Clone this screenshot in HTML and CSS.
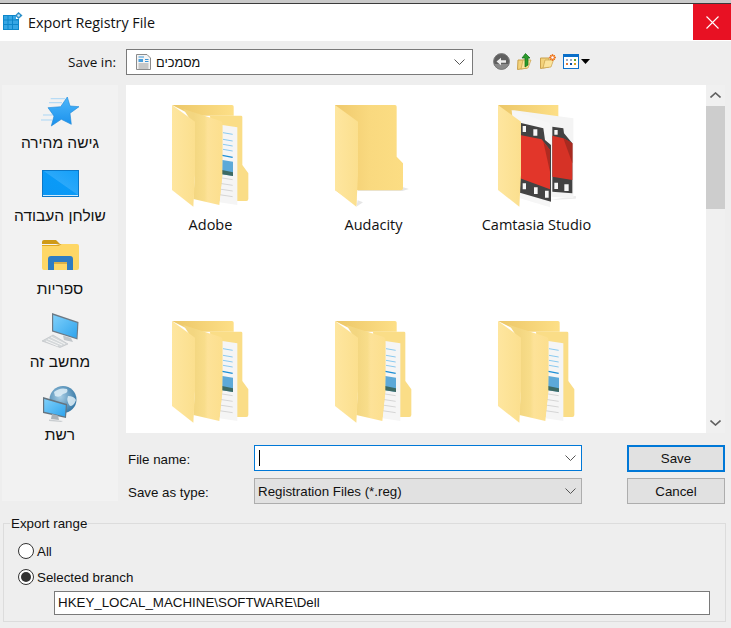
FILE: index.html
```html
<!DOCTYPE html>
<html lang="en">
<head>
<meta charset="utf-8">
<title>Export Registry File</title>
<link rel="stylesheet" href="styles.css">
</head>
<body>
<svg class="defs" width="0" height="0" aria-hidden="true">
  <defs>
    <linearGradient id="flap" x1="0" y1="0" x2="1" y2="0"><stop offset="0" stop-color="#fee69f"/><stop offset="1" stop-color="#fbdf8e"/></linearGradient>
    <linearGradient id="flap2" gradientUnits="userSpaceOnUse" x1="100" y1="0" x2="187" y2="0"><stop offset="0" stop-color="#f3d680"/><stop offset=".38" stop-color="#f8dd8a"/><stop offset=".5" stop-color="#fde298"/><stop offset="1" stop-color="#fcdf8e"/></linearGradient>
    <linearGradient id="tab" x1="0" y1="0" x2="1" y2="0"><stop offset="0" stop-color="#ecc768"/><stop offset="1" stop-color="#fddf87"/></linearGradient>
    <linearGradient id="back" x1="0" y1="0" x2="1" y2="0"><stop offset="0" stop-color="#efc96c"/><stop offset=".5" stop-color="#f9d97f"/><stop offset="1" stop-color="#fcdd83"/></linearGradient>
    <linearGradient id="desk" x1="0" y1="1" x2="1" y2="0"><stop offset="0" stop-color="#0b97f4"/><stop offset=".5" stop-color="#0a9af7"/><stop offset=".52" stop-color="#2aa8fa"/><stop offset="1" stop-color="#15a0f8"/></linearGradient>
    <linearGradient id="star" x1="0" y1="0" x2="0" y2="1"><stop offset="0" stop-color="#4cb7fb"/><stop offset="1" stop-color="#1a90ec"/></linearGradient>
    <linearGradient id="scr" x1="0" y1="0" x2="1" y2="1"><stop offset="0" stop-color="#7fd0fb"/><stop offset="1" stop-color="#2ea3ec"/></linearGradient>
    <radialGradient id="globe" cx=".4" cy=".4" r=".7"><stop offset="0" stop-color="#a9cfe6"/><stop offset="1" stop-color="#2a6f9f"/></radialGradient>

    <symbol id="folder-docs" viewBox="30 30 240 315">
      <path d="M36 30H216q5 0 5 5V62H100Z" fill="url(#tab)"/>
      <path d="M150 62H243q4 0 4 4V210L265 235V312q0 6-6 6H170Z" fill="#fadd87"/>
      <path d="M187 90 232 97V330L178 322 187 240Z" fill="#f5f5f5"/>
      <path d="M189 113 218 118M189 133 218 138M189 148 218 153M189 163 218 168" stroke="#74c0ee" stroke-width="2.500"/>
      <path d="M187 181 218 187" stroke="#1c8fd6" stroke-width="4"/>
      <path d="M187 195 219 200V243L186 238Z" fill="#5da9d8"/>
      <path d="M186 225 219 232V243L186 238Z" fill="#3d6a63"/>
      <path d="M180 248 218 254M179 265 218 271M178 282 218 288M178 299 218 305" stroke="#c4c4c4" stroke-width="2"/>
      <path d="M70 42 182 78Q187 80 187 85V240L178 330 100 312 104 250V95Z" fill="url(#flap2)"/>
      <path d="M36 30 105 80V240L100 335 36 285Z" fill="url(#flap)"/>
    </symbol>

    <symbol id="folder-plain" viewBox="30 30 240 315">
      <path d="M105 288H238L258 282 238 276H105ZM100 335 120 322 104 316Z" fill="#e6e6e6"/>
      <path d="M36 30H216q5 0 5 5V185L240 205V280q0 6-6 6H100V330L36 285Z" fill="url(#back)"/>
      <path d="M36 30 105 80V240L100 335 36 285Z" fill="url(#flap)"/>
    </symbol>

    <symbol id="folder-film" viewBox="30 30 240 315">
      <path d="M36 30H217V80H60Z" fill="url(#tab)"/>
      <g transform="translate(27 15)">
        <path d="M165 300 240 296 255 292 240 288Z" fill="#ececec"/>
        <path d="M52 30 235 55V295L170 290 100 60Z" fill="#f4f4f4"/>
        <path d="M172 80 205 85 207 100 232 130V280L172 275Z" fill="#424242"/>
        <path d="M172 107 205 115 232 130V240L172 230Z" fill="#d63226"/>
        <path d="M205 115 232 130V190Z" fill="#a82a20"/>
        <path d="M178 90h10v14h-10zM178 248h11v19h-11zM208 253h13v20h-13z" fill="#f6f6f6"/>
        <path d="M50 30 165 70V322L75 295Z" fill="#f6f6f6"/>
        <path d="M75 68 145 85 150 120 168 135V305L75 278Z" fill="#434343"/>
        <path d="M75 105 140 118 165 150V268L75 235Z" fill="#e2362a"/>
        <path d="M145 125 165 150V215Z" fill="#b02b21"/>
        <path d="M83 78h10v18H83zM115 88h12v19h-12zM83 250h10v18H83zM117 262h11v20h-11zM150 272h11v21h-11z" fill="#f7f7f7"/>
      </g>
      <path d="M36 30 105 80V240L100 335 36 285Z" fill="url(#flap)"/>
    </symbol>
  </defs>
</svg>

<div class="window">
  <div class="strip"></div>
  <header class="titlebar">
    <svg class="app-icon" width="20" height="20" viewBox="0 0 20 20">
      <path d="M0 3H13V7H16V18H0Z" fill="#0d86c9"/>
      <path d="M1 4h3.500v3.500H1zM5.500 4H9v3.500H5.500zM10 4h3v3.500h-3zM1 8.500h3.500V12H1zM5.500 8.500H9V12H5.500zM10 8.500h5V12h-5zM1 13h3.500v4H1zM5.500 13H9v4H5.500zM10 13h5v4h-5z" fill="#36a6e4"/>
      <path d="M15.500 0 19.500 3.500 15.500 7 12 3.500Z" fill="#2b8fc9"/><circle cx="15.600" cy="3.500" r="1.300" fill="#c8e6f7"/>
    </svg>
    <span class="title">Export Registry File</span>
    <button class="close" type="button" aria-label="Close">
      <svg width="13" height="13" viewBox="0 0 13 13"><path d="M.5.500 12.500 12.500M12.500.500.5 12.500" stroke="#fff" stroke-width="1.100"/></svg>
    </button>
  </header>

  <div class="toolbar">
    <span class="save-in">Save in:</span>
    <div class="combo">
      <svg width="15" height="16" viewBox="0 0 15 16"><path d="M.5.500H11L14.500 4V15.500H.5Z" fill="#f4f4f4" stroke="#8b8b8b"/><path d="M2.500 3H8M9 5.500H12.500M9 7.500H12.500" stroke="#3a95d8"/><path d="M2.500 8H7V5H2.500Z" fill="#4a9fdc"/><path d="M2.500 10H12.500M2.500 12H12.500M2.500 14H12.500" stroke="#9a9a9a"/></svg>
      <span class="combo-text" dir="rtl">מסמכים</span>
      <svg class="chev" width="11" height="6" viewBox="0 0 11 6"><path d="M.5.500 5.500 5.500 10.500.500" fill="none" stroke="#555"/></svg>
    </div>
    <div class="tools">
      <svg width="17" height="17" viewBox="0 0 17 17"><circle cx="8.500" cy="8.500" r="8" fill="#5f5f5f"/><path d="M1 11A8 8 0 0 0 16 11Z" fill="#8a8a8a"/><circle cx="8.500" cy="8.500" r="7.900" fill="none" stroke="#7d7d7d"/><path d="M3.500 8.500 8 4.800V7.200H13V9.800H8V12.200Z" fill="#eee"/></svg>
      <svg class="up" width="15" height="17" viewBox="0 0 15 17"><path d="M1 7H10V15L.5 16.500Z" fill="#f3d27a" stroke="#c9a04b"/><path d="M4 16 11 15 14 7H6Z" fill="#fbe39b" stroke="#c9a04b" stroke-width=".7"/><path d="M8.500.5 13 5H11V12L8 14V5H5Z" fill="#2b9a2b" stroke="#0f6e14" stroke-width=".7"/></svg>
      <svg class="new" width="16" height="15" viewBox="0 0 16 15"><path d="M.5 4H9V13L.5 14.500Z" fill="#f3d27a" stroke="#c9a04b"/><path d="M3 14 11 13 13.500 6H5Z" fill="#fbe39b" stroke="#c9a04b" stroke-width=".7"/><circle cx="12.500" cy="3.500" r="3" fill="#f2a23a"/><path d="M12.500 0V7M9 3.500H16M10 1 15 6M15 1 10 6" stroke="#e8602c" stroke-width=".8"/><circle cx="12.500" cy="3.500" r="1.200" fill="#fff"/></svg>
      <svg class="views" width="16" height="15" viewBox="0 0 16 15"><rect x=".5" y=".5" width="15" height="14" fill="#fff" stroke="#0a6fc9"/><rect x="0" y="0" width="16" height="3" fill="#0a6fc9"/><path d="M3 5h2v2H3zM7 5h2v2H7z" fill="#9aa9c4"/><path d="M11 5h2v2h-2z" fill="#5aa02c"/><path d="M3 9h2v2H3z" fill="#e07a3a"/><path d="M7 9h2v2H7z" fill="#0a4fa0"/><path d="M11 9h2v2h-2z" fill="#d8a020"/></svg>
      <svg class="caret" width="9" height="5" viewBox="0 0 9 5"><path d="M0 0H9L4.500 5Z" fill="#000"/></svg>
    </div>
  </div>

  <main class="main">
    <nav class="places" dir="rtl">
      <div class="place">
        <svg class="i-star" width="38" height="30" viewBox="0 0 38 30"><path d="M9.700 1.700H24M8 5.700H21M2 18H13M-.3 23H11" stroke="#a9d6f5" stroke-width="1"/><path d="M26.300 0 29 9 38 9.700 29 16.300 30.300 27.300 20.300 22.300 10.300 29 13 19 7 10.700 19.700 9.700Z" fill="url(#star)" stroke="#1a86d8" stroke-width=".6"/></svg>
        <span>גישה מהירה</span>
      </div>
      <div class="place">
        <svg class="i-desk" width="37" height="27" viewBox="0 0 37 27"><rect width="37" height="27" fill="#0b78c8"/><rect x="1" y="1" width="35" height="24.500" fill="url(#desk)"/><path d="M1 25.500H36" stroke="#cfeafc"/></svg>
        <span>שולחן העבודה</span>
      </div>
      <div class="place">
        <svg class="i-lib" width="37" height="30" viewBox="0 0 37 30"><path d="M0 2Q0 0 2 0H14L18 4H0Z" fill="#cf9a17"/><path d="M0 6H17L20 4H35Q37 4 37 6V28Q37 30 35 30H2Q0 30 0 28Z" fill="#fed766"/><path d="M0 6H17L20 4H18L14 5H0Z" fill="#e0a820"/><path d="M6 30V19Q6 16 9 16H28Q31 16 31 19V30H25V22H12V30Z" fill="#2f7cc2"/><path d="M12 22H25V24H12Z" fill="#d9b04a"/></svg>
        <span>ספריות</span>
      </div>
      <div class="place">
        <svg class="i-pc" width="37" height="35" viewBox="0 0 37 35"><path d="M10 0 36.500 9 35.500 26.500 10 18.500Z" fill="#6c7a86"/><path d="M11.200 2 35.300 10 34.500 25 11.200 17.500Z" fill="url(#scr)"/><path d="M21 22.500 29 25 31 29 22 27Z" fill="#c2c7cb"/><path d="M11 22 26 31 18 34.500 0 28Z" fill="#d4d8da" stroke="#b2b7bb" stroke-width=".5"/><path d="M6 26 20 32M4 28 16 33M9 24 23 31" stroke="#f4f4f4"/></svg>
        <span>מחשב זה</span>
      </div>
      <div class="place">
        <svg class="i-net" width="35" height="36" viewBox="0 0 35 36"><circle cx="20" cy="13.500" r="13.500" fill="url(#globe)"/><path d="M11 6Q17 1 24 3 26 7 20 8 17 12 12 10ZM25 10Q31 10 33 14 31 20 27 20 23 15 25 10Z" fill="#dfeef7" opacity=".85"/><path d="M0 11 24 18 23 32 0 27Z" fill="#66737e"/><path d="M1.200 13 22.800 19.300 22 30.500 1.200 25.800Z" fill="url(#scr)"/><path d="M9 28 15 29.500 16 34 8 33Z" fill="#aab2b8"/><path d="M6 33.500 20 35 18 36 6 35Z" fill="#c9cdd0"/></svg>
        <span>רשת</span>
      </div>
    </nav>

    <section class="right">
      <div class="browser">
        <div class="files">
          <div class="file"><svg width="80" height="105"><use href="#folder-docs"/></svg><span>Adobe</span></div>
          <div class="file"><svg width="80" height="105"><use href="#folder-plain"/></svg><span>Audacity</span></div>
          <div class="file"><svg width="80" height="105"><use href="#folder-film"/></svg><span>Camtasia Studio</span></div>
          <div class="file"><svg width="80" height="105"><use href="#folder-docs"/></svg></div>
          <div class="file"><svg width="80" height="105"><use href="#folder-docs"/></svg></div>
          <div class="file"><svg width="80" height="105"><use href="#folder-docs"/></svg></div>
        </div>
        <div class="scrollbar">
          <svg width="11" height="6" viewBox="0 0 11 6"><path d="M.5 5.500 5.500 1 10.500 5.500" fill="none" stroke="#606060" stroke-width="1.600"/></svg>
          <div class="track"><div class="thumb"></div></div>
          <svg width="11" height="6" viewBox="0 0 11 6"><path d="M.5.500 5.500 5 10.500.500" fill="none" stroke="#606060" stroke-width="1.600"/></svg>
        </div>
      </div>

      <div class="form">
        <label>File name:</label>
        <div class="field focus"><span class="cursor"></span><svg width="11" height="6" viewBox="0 0 11 6"><path d="M.5.500 5.500 5.500 10.500.500" fill="none" stroke="#555"/></svg></div>
        <button class="btn default" type="button">Save</button>
        <label>Save as type:</label>
        <div class="field select"><span>Registration Files (*.reg)</span><svg width="11" height="6" viewBox="0 0 11 6"><path d="M.5.500 5.500 5.500 10.500.500" fill="none" stroke="#555"/></svg></div>
        <button class="btn" type="button">Cancel</button>
      </div>
    </section>
  </main>

  <fieldset class="range">
    <legend>Export range</legend>
    <div class="radio"><span class="dot"></span>All</div>
    <div class="radio"><span class="dot on"></span>Selected branch</div>
    <div class="path">HKEY_LOCAL_MACHINE\SOFTWARE\Dell</div>
  </fieldset>
</div>
</body>
</html>
```

FILE: styles.css
```css
* { box-sizing: border-box; }
html, body { margin: 0; padding: 0; }
body { width: 731px; height: 628px; overflow: hidden; background: #eeeeee; color: #111; font-family: "Liberation Sans", Arial, sans-serif; font-size: 13.33px; }
.defs { position: absolute; }
.window { display: flex; flex-direction: column; height: 628px; }
.strip { height: 4px; background: #c9c9c9; border-bottom: 1px solid #3a3a3a; }

.titlebar { height: 37px; background: #fff; display: flex; align-items: center; padding-left: 3px; }
.app-icon { margin-right: 5px; margin-top: -1px; }
.title { font-family: "Open Sans", sans-serif; font-size: 14.300px; flex: 1; margin-top: -1px; }
.close { width: 38px; height: 36px; align-self: flex-start; background: #e81123; border: 0; padding: 0; display: flex; align-items: center; justify-content: center; }

.toolbar { height: 44px; display: flex; align-items: flex-start; padding-top: 8px; }
.save-in { width: 116px; text-align: right; font-family: "Open Sans", sans-serif; font-size: 13.500px; line-height: 26px; }
.combo { margin-left: 10px; width: 347px; height: 26px; background: #fff; border: 1px solid #7a7a7a; display: flex; align-items: center; padding: 0 7px 0 9px; }
.combo-text { flex: 1; margin-left: 5px; font-size: 12.800px; text-align: left; unicode-bidi: plaintext; }
.tools { display: flex; align-items: center; margin-left: 20px; height: 20px; margin-top: 2px; }
.tools .up { margin-left: 7px; }
.tools .new { margin-left: 8px; }
.tools .views { margin-left: 7px; }
.tools .caret { margin-left: 2px; }

.main { display: flex; padding-left: 2px; height: 425px; }
.places { width: 116px; height: 416px; background: #f2f2f2; display: flex; flex-direction: column; }
.place { height: 73px; display: flex; flex-direction: column; align-items: center; justify-content: flex-end; padding-bottom: 7px; font-size: 15.500px; color: #111; }
.place span { line-height: 17px; }
.i-star { margin-bottom: 7px; }
.i-desk { margin-bottom: 10px; }
.i-lib { margin-bottom: 10px; }
.i-pc { margin-bottom: 5px; }
.i-net { margin-bottom: 4px; }

.right { width: 605px; margin-left: 8px; display: flex; flex-direction: column; }
.browser { height: 348px; display: flex; }
.files { width: 580px; background: #fff; display: grid; grid-template-columns: repeat(3, 163px); grid-auto-rows: 216px; padding-left: 3px; overflow: hidden; align-content: start; }
.file { display: flex; flex-direction: column; align-items: center; padding-top: 20px; font-family: "Open Sans", sans-serif; font-size: 14.500px; }
.file svg { margin-right: 1px; }
.file span { margin-top: 5px; line-height: 20px; }
.scrollbar { width: 19px; background: #f0f0f0; display: flex; flex-direction: column; align-items: center; padding: 7px 0; }
.track { flex: 1; width: 100%; padding-top: 8px; }
.thumb { height: 103px; background: #cdcdcd; }

.form { display: grid; grid-template-columns: 126px 328px 143px; grid-template-rows: 27px 26px; row-gap: 6px; padding-left: 2px; margin-top: 12px; align-items: center; }
.form .btn { margin-left: 45px; }
.form label { font-size: 13.33px; padding-top: 2px; }
.field { height: 26px; display: flex; align-items: center; justify-content: space-between; padding: 0 5px 0 3px; border: 1px solid #7a7a7a; background: #fff; }
.field.focus { border-color: #0078d7; align-self: start; }
.cursor { width: 1px; height: 16px; background: #000; margin-left: 1px; }
.field.select { background: #e1e1e1; border-color: #adadad; font-size: 13.33px; }
.btn { width: 98px; height: 26px; background: #e1e1e1; border: 1px solid #adadad; font: inherit; color: #111; padding: 0; }
.btn.default { border: 2px solid #0078d7; height: 27px; }

.range { margin: 6px 5px 0 3px; padding: 7px 0 0 14px; height: 106px; border: 1px solid #dcdcdc; min-width: 0; }
.range legend { padding: 0 1px; margin-left: -8px; font-size: 13.33px; line-height: 15px; }
.radio { display: flex; align-items: center; height: 26px; font-size: 13.33px; }
.dot { width: 16px; height: 16px; border: 1px solid #333; border-radius: 50%; background: #fff; margin-right: 3px; display: flex; align-items: center; justify-content: center; }
.dot.on::after { content: ""; width: 10px; height: 10px; border-radius: 50%; background: #333; }
.path { margin: 1px 0 0 36px; width: 656px; height: 24px; background: #fff; border: 1px solid #7a7a7a; line-height: 22px; padding-left: 3px; font-size: 13.33px; }
```
